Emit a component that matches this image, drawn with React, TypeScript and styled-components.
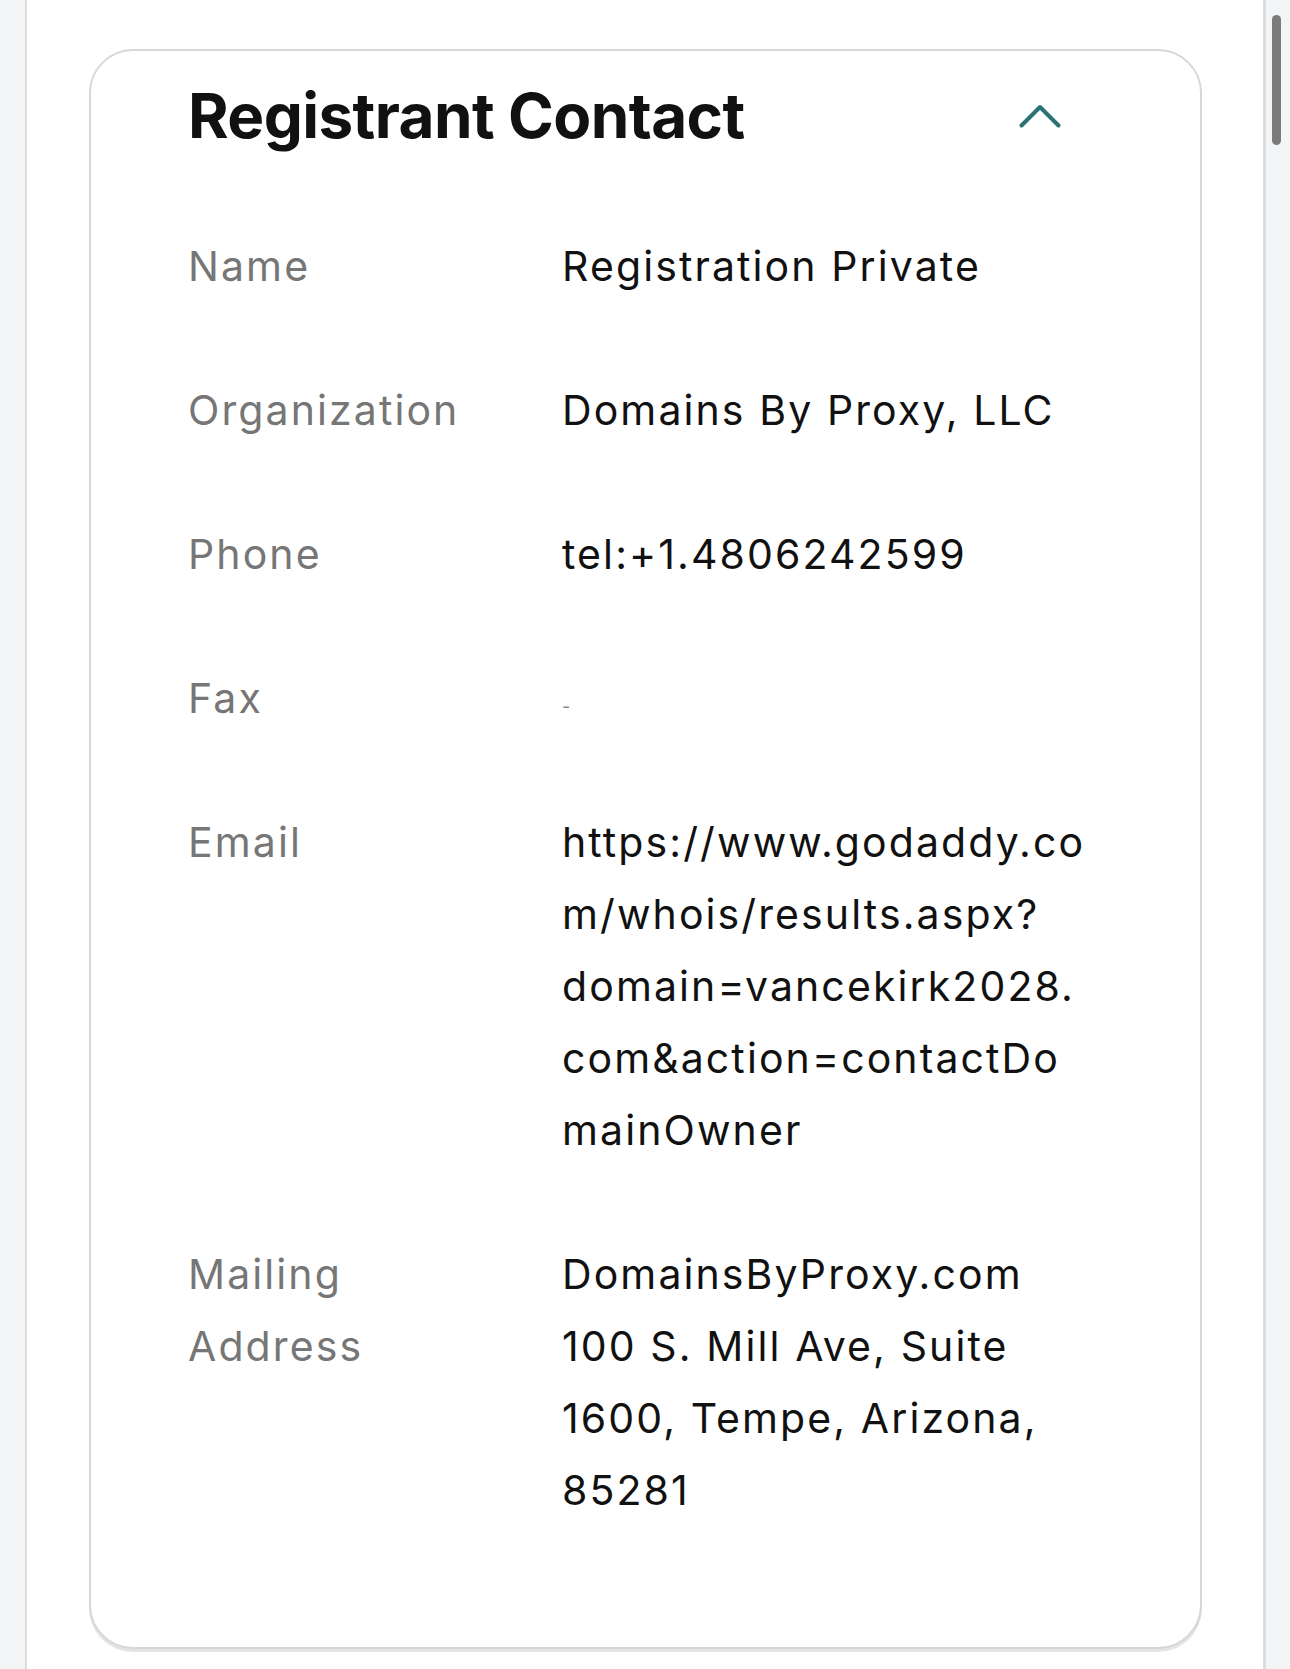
import React from 'react'
import styled, { createGlobalStyle } from 'styled-components'

const GlobalStyle = createGlobalStyle`
  html, body {
    margin: 0;
    padding: 0;
    background: #f4f5f7;
    font-family: Inter, "Liberation Sans", sans-serif;
    color: #111111;
  }
`

const Page = styled.div`
  box-sizing: border-box;
  min-height: 100vh;
  margin: 0 24px 0 25px;
  padding: 49px 61px 20px 62px;
  background: #ffffff;
  border-left: 2px solid #dcdde0;
  border-right: 3px solid #dcdde0;
`

const ScrollThumb = styled.div`
  position: fixed;
  top: 15px;
  right: 9px;
  width: 9px;
  height: 130px;
  border-radius: 5px;
  background: #7b7b7b;
`

const Card = styled.section`
  box-sizing: border-box;
  border: 2px solid #d6d7da;
  border-radius: 44px;
  box-shadow: 0 3px 0 #e4e4e6;
  padding: 28px 97px 121px;
  background: #ffffff;
`

const Header = styled.div`
  display: flex;
  align-items: center;
  justify-content: space-between;
  margin-bottom: 77px;
`

const Title = styled.h2`
  margin: 0;
  font-size: 62px;
  font-weight: 700;
  line-height: 1.2;
  letter-spacing: -0.6px;
  color: #111111;
`

const Toggle = styled.button`
  display: flex;
  align-items: center;
  justify-content: center;
  margin-right: 42px;
  padding: 0;
  border: none;
  background: none;
  color: #2b7273;
  cursor: pointer;
`

const Details = styled.dl`
  display: grid;
  grid-template-columns: 374px 1fr;
  row-gap: 72px;
  margin: 0;
  font-size: 41px;
  line-height: 72px;
  letter-spacing: 2.1px;
`

const Label = styled.dt`
  margin: 0;
  color: #767676;
  max-width: 260px;
`

const Value = styled.dd`
  margin: 0;
  max-width: 531px;
  color: #111111;
  overflow-wrap: anywhere;
`

const Empty = styled.span`
  font-size: 18px;
  line-height: 1;
  letter-spacing: 0;
  color: #8a8a8a;
`

type TField = {
  label: string
  value: string
}

// keep slashes from being break points, as in the original rendering
const noSlashBreaks = (text: string) => text.replace(/\//g, '/\u2060')

const fields: TField[] = [
  { label: 'Name', value: 'Registration Private' },
  { label: 'Organization', value: 'Domains By Proxy, LLC' },
  { label: 'Phone', value: 'tel:+1.4806242599' },
  { label: 'Fax', value: '' },
  {
    label: 'Email',
    value: noSlashBreaks(
      'https://www.godaddy.com/whois/results.aspx?domain=vancekirk2028.com&action=contactDomainOwner'
    ),
  },
  {
    label: 'Mailing Address',
    value: 'DomainsByProxy.com 100 S. Mill Ave, Suite 1600, Tempe, Arizona, 85281',
  },
]

function ChevronUp() {
  return (
    <svg width="42" height="24" viewBox="0 0 42 24" fill="none">
      <path
        d="M2.5 21.5 L21 3 L39.5 21.5"
        stroke="currentColor"
        strokeWidth="4"
        strokeLinecap="round"
        strokeLinejoin="round"
      />
    </svg>
  )
}

function App() {
  return (
    <>
      <GlobalStyle />
      <Page>
        <Card>
          <Header>
            <Title>Registrant Contact</Title>
            <Toggle aria-label="Collapse">
              <ChevronUp />
            </Toggle>
          </Header>

          <Details>
            {fields.map((field) => (
              <React.Fragment key={field.label}>
                <Label>{field.label}</Label>
                <Value>{field.value || <Empty>-</Empty>}</Value>
              </React.Fragment>
            ))}
          </Details>
        </Card>
      </Page>
      <ScrollThumb />
    </>
  )
}

export default App
